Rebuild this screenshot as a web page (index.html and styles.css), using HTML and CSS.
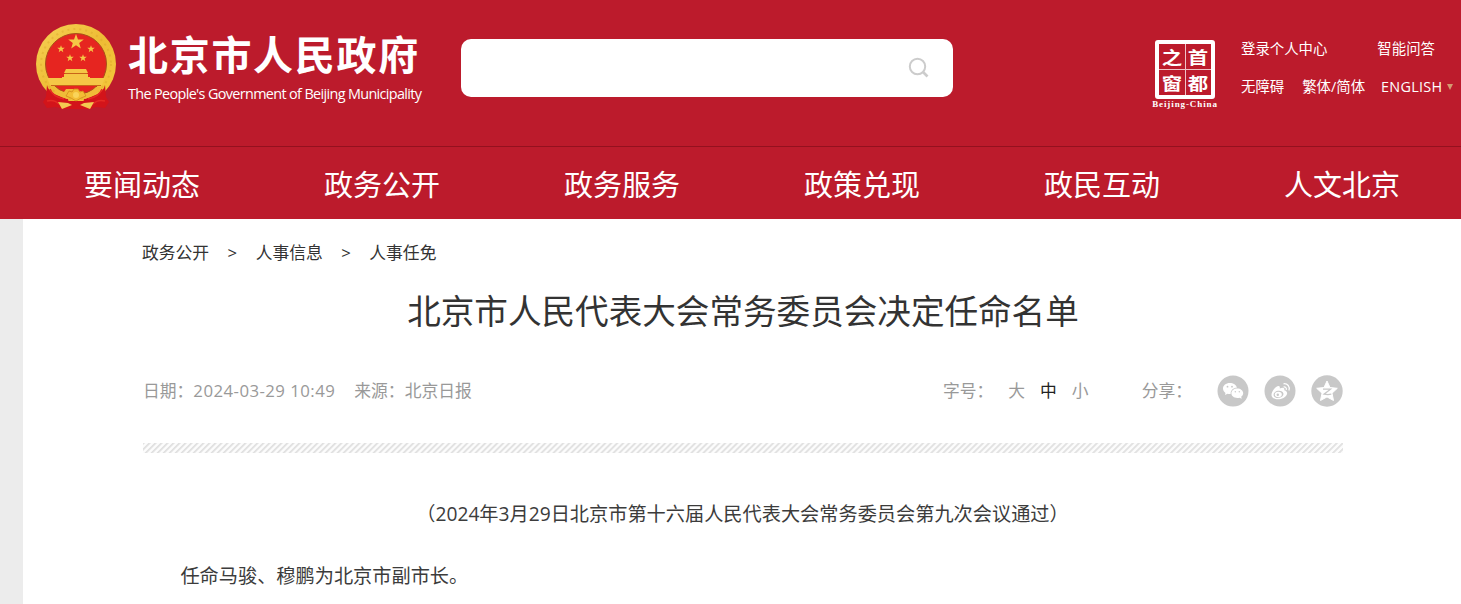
FILE: index.html
```html
<!DOCTYPE html>
<html lang="zh-CN">
<head>
    <meta charset="UTF-8">
    <meta name="viewport" content="width=device-width, initial-scale=1.0">
    <title>北京市人民代表大会常务委员会决定任命名单</title>
    <link rel="stylesheet" href="styles.css">
</head>
<body>
    <header class="header">
        <div class="top">
            <a class="logo" href="#">
                <svg class="emblem" width="82" height="88" viewBox="0 0 82 88">
                    <defs>
                        <linearGradient id="gold" x1="0" y1="0" x2="1" y2="1">
                            <stop offset="0" stop-color="#f6d155"/>
                            <stop offset=".5" stop-color="#eebc35"/>
                            <stop offset="1" stop-color="#f5c83c"/>
                        </linearGradient>
                        <path id="star" d="M0-8 2-2.6 7.8-2.5 3.2 1.1 4.8 6.6 0 3.3-4.8 6.6-3.2 1.1-7.8-2.5-2-2.6z"/>
                    </defs>
                    <circle cx="41" cy="41" r="40" fill="url(#gold)"/>
                    <circle cx="41" cy="41" r="35" fill="none" stroke="#d59d25" stroke-width="2" stroke-dasharray="2 4" opacity=".35"/>
                    <circle cx="41" cy="41" r="30.5" fill="#e62520" stroke="#a95118" stroke-width="1"/>
                    <g fill="#f5c746">
                        <use href="#star" transform="translate(41 19)"/>
                        <use href="#star" transform="translate(26 26) scale(.48)"/>
                        <use href="#star" transform="translate(56 26) scale(.48)"/>
                        <use href="#star" transform="translate(35 35) scale(.48)"/>
                        <use href="#star" transform="translate(48 35) scale(.48)"/>
                        <path d="M31 46h20l2 4H29zM29 51h24v3h2v4H27v-4h2z"/>
                        <path d="M12 55h58l-3 7H15z"/>
                    </g>
                    <path d="M30 50.500h22M16 62.500h50" stroke="#c86518" stroke-width="1"/>
                    <path d="M12 62q1 7 12 11l9 3 2 9-5 1-10-2-8 1-4-6 3-5z" fill="#d3141a"/>
                    <path d="M70 62q-1 7-12 11l-9 3-2 9 5 1 10-2 8 1 4-6-3-5z" fill="#d3141a"/>
                    <path d="M15 66q3 8 14 10M67 66q-3 8-14 10M12 78q7-2 12 3M70 78q-7-2-12 3" fill="none" stroke="#e52a24" stroke-width="1.500"/>
                    <path d="M29 78h24l4 8H25z" fill="#d3141a"/>
                    <path d="M23 79l10 1 4 2-10 4zM59 79l-10 1-4 2 10 4z" fill="#f4ca51"/>
                    <path d="M15 64q6 9 17 12l5-2h8l5 2q11-3 17-12l-6 0q-5 6-12 7l-3-3-3 1-2-3h-10l-2 3-3-1-3 3q-5-2-8-7z" fill="#f0bb38"/>
                    <path d="M31 73l3-5 3 1 2-3h4l2 3 3-1 3 5-5 2-5 3-5-3z" fill="#f3bd35" stroke="#d28b1c" stroke-width=".8"/>
                    <circle cx="41" cy="72" r="3" fill="#f9d45a"/>
                </svg>
                <span class="logo-text">
                    <strong>北京市人民政府</strong>
                    <span class="logo-en">The People's Government of Beijing Municipality</span>
                </span>
            </a>
            <div class="search">
                <svg width="22" height="22" viewBox="0 0 22 22" fill="none" stroke="#ccc" stroke-width="2">
                    <circle cx="9.500" cy="9.500" r="7.700"/>
                    <path d="M15 15l4.500 4.500" stroke-width="2.600"/>
                </svg>
            </div>
            <a class="stamp" href="#">
                <span class="stamp-box">
                    <span>之</span><span>首</span>
                    <span>窗</span><span>都</span>
                </span>
                <span class="stamp-name">Beijing-China</span>
            </a>
            <div class="links">
                <div class="links-row">
                    <a href="#">登录个人中心</a>
                    <a href="#">智能问答</a>
                </div>
                <div class="links-row">
                    <a href="#">无障碍</a>
                    <a href="#">繁体/简体</a>
                    <a class="english" href="#">ENGLISH</a>
                </div>
            </div>
        </div>
        <nav class="nav">
            <a href="#">要闻动态</a>
            <a href="#">政务公开</a>
            <a href="#">政务服务</a>
            <a href="#">政策兑现</a>
            <a href="#">政民互动</a>
            <a href="#">人文北京</a>
        </nav>
    </header>

    <main class="main">
        <div class="crumbs">
            <a href="#">政务公开</a>
            <span>&gt;</span>
            <a href="#">人事信息</a>
            <span>&gt;</span>
            <a href="#">人事任免</a>
        </div>
        <h1>北京市人民代表大会常务委员会决定任命名单</h1>
        <div class="info">
            <span class="date">日期：<span class="time">2024-03-29 10:49</span></span>
            <span>来源：北京日报</span>
            <div class="size">
                <span class="size-label">字号：</span>
                <a href="#">大</a>
                <a class="active" href="#">中</a>
                <a href="#">小</a>
            </div>
            <div class="share">
                <span class="share-label">分享：</span>
                <a href="#">
                    <svg width="32" height="32" viewBox="0 0 32 32">
                        <circle cx="16" cy="16" r="15.500" fill="#c8c8c8"/>
                        <path d="M12.700 8C9 8 6 10.400 6 13.500c0 1.800 1 3.400 2.500 4.400L8 20l2.500-1.200q1.500.4 3.200.3c-.5-3.700 2.700-6.300 6.200-6.300C19.400 10 16.300 8 12.700 8z" fill="#fff"/>
                        <path d="M20.300 13.500c-3.400 0-5.900 2.100-5.900 4.800s2.500 4.700 5.900 4.700q1.200 0 2.200-.3l2.200 1.100-.5-2c1.200-.9 2-2.100 2-3.500 0-2.700-2.600-4.800-5.900-4.800z" fill="#fff"/>
                        <g fill="#c8c8c8"><circle cx="10.500" cy="11.700" r=".9"/><circle cx="15" cy="11.700" r=".9"/><circle cx="18.300" cy="16.800" r=".7"/><circle cx="22.300" cy="16.800" r=".7"/></g>
                    </svg>
                </a>
                <a href="#">
                    <svg width="32" height="32" viewBox="0 0 32 32">
                        <circle cx="16" cy="16" r="15.500" fill="#c8c8c8"/>
                        <path d="M13.500 11.200c1.500-.5 2.800 0 2.300 2.200 2.700-1.200 5.300-.8 4.500 1.900 4.500 1.300 3.300 5.500-.8 7.600-5 2.600-12 1.300-12-2.900 0-3.400 3.500-7.800 6-8.800z" fill="#fff"/>
                        <ellipse cx="14.500" cy="19.300" rx="5" ry="3.600" fill="#c8c8c8" transform="rotate(-10 14.500 19.300)"/>
                        <ellipse cx="14.300" cy="19.500" rx="3.500" ry="2.800" fill="#fff"/>
                        <circle cx="13.800" cy="19.800" r="1.200" fill="#c8c8c8"/>
                        <path d="M19.500 12c2-.4 3.400 1.200 2.700 3M19.500 8.800c4-.6 6.800 2.900 5.400 6.700" fill="none" stroke="#fff" stroke-width="1.200"/>
                    </svg>
                </a>
                <a href="#">
                    <svg width="32" height="32" viewBox="0 0 32 32">
                        <circle cx="16" cy="16" r="15.700" fill="#c8c8c8"/>
                        <path d="M16 6l3 6.500 7.300.8-5.300 4.900 1.500 7.300L16 21.900l-6.500 3.600 1.500-7.300-5.300-4.900 7.300-.8z" fill="#fff" stroke="#fff" stroke-linejoin="round"/>
                        <path d="M12 14.200h7.500l-6.500 5q4 .7 7.300 0" fill="none" stroke="#c8c8c8" stroke-width="1.300"/>
                    </svg>
                </a>
            </div>
        </div>
        <div class="line"></div>
        <article class="article">
            <p class="center">（2024年3月29日北京市第十六届人民代表大会常务委员会第九次会议通过）</p>
            <p class="indent">任命马骏、穆鹏为北京市副市长。</p>
        </article>
    </main>
</body>
</html>
```

FILE: styles.css
```css
* {
    box-sizing: border-box;
}

body {
    margin: 0;
    height: 604px;
    overflow: hidden;
    background: #ececec;
    color: #333;
    font-family: "Open Sans", "Noto Sans CJK SC", sans-serif;
    font-size: 16.8px;
}

a {
    color: inherit;
    text-decoration: none;
}

.header {
    height: 219px;
    background: #bc1b2c;
    color: #fff;
}

.top {
    display: flex;
    align-items: flex-start;
    height: 147px;
    padding-left: 35px;
    border-bottom: 1px solid #94111f;
}

.logo {
    display: flex;
    width: 426px;
    padding-top: 23px;
}

.logo-text {
    display: flex;
    flex-direction: column;
    margin-left: 11px;
    white-space: nowrap;
}

.logo-text strong {
    padding-top: 2px;
    font-size: 40px;
    line-height: 60px;
    letter-spacing: 1.7px;
}

.logo-en {
    margin-top: -2px;
    font-size: 14.4px;
    line-height: 22px;
    letter-spacing: -0.64px;
}

.search {
    display: flex;
    align-items: center;
    justify-content: flex-end;
    width: 492px;
    height: 58px;
    margin-top: 39px;
    padding-right: 23px;
    background: #fff;
    border-radius: 10px;
}

.stamp {
    display: flex;
    flex-direction: column;
    align-items: center;
    width: 68px;
    margin: 40px 0 0 198px;
}

.stamp-box {
    display: grid;
    grid-template-columns: 1fr 1fr;
    grid-template-rows: 1fr 1fr;
    width: 60px;
    height: 59px;
    border: 4px solid #fff;
    border-radius: 3px;
    background:
        linear-gradient(#f0c2c7, #f0c2c7) center / 1px 100% no-repeat,
        linear-gradient(#f0c2c7, #f0c2c7) center / 100% 1px no-repeat;
}

.stamp-box span {
    text-align: center;
    font-family: "Noto Sans CJK SC", sans-serif;
    font-size: 17px;
    font-weight: bold;
    line-height: 25px;
    transform: scaleX(1.2);
}

.stamp-name {
    font-family: "Liberation Serif", serif;
    font-size: 9px;
    font-weight: bold;
    line-height: 10px;
    letter-spacing: 0.9px;
    white-space: nowrap;
}

.links {
    width: 220px;
    margin: 37px 0 0 22px;
    font-size: 14.4px;
    line-height: 24px;
    white-space: nowrap;
}

.links-row {
    display: flex;
    height: 37px;
}

.links-row:first-child {
    gap: 50px;
}

.links-row:last-child {
    padding-top: 1px;
}

.links-row:last-child a {
    margin-right: 18px;
}

.links-row:last-child a:nth-child(2) {
    margin-right: 16px;
}

.links-row .english {
    letter-spacing: 0.3px;
}

.links-row .english::after {
    content: "";
    display: inline-block;
    margin-left: 5px;
    border: 3px solid transparent;
    border-top: 6px solid #d49a70;
    border-bottom: 0;
    vertical-align: 2px;
}

.nav {
    display: flex;
    height: 72px;
    padding-left: 22px;
}

.nav a {
    flex: 0 0 240px;
    text-align: center;
    font-size: 29px;
    line-height: 75px;
}

.main {
    height: 385px;
    margin-left: 23px;
    padding: 0 118px 0 120px;
    background: #fff;
}

.crumbs {
    display: flex;
    height: 68px;
    margin-left: -1px;
    line-height: 68px;
}

.crumbs span {
    width: 46.5px;
    text-align: center;
}

h1 {
    margin: -1px 0 0;
    text-align: center;
    font-size: 33.6px;
    font-weight: normal;
    line-height: 50px;
}

.info {
    display: flex;
    align-items: center;
    height: 32px;
    margin-top: 39px;
    color: #999;
    line-height: 24px;
    white-space: nowrap;
}

.date {
    margin-right: 19px;
}

.time {
    letter-spacing: 0.45px;
}

.size {
    display: flex;
    gap: 15px;
    margin-left: auto;
}

.size .active {
    color: #222;
}

.share {
    display: flex;
    align-items: center;
    gap: 15px;
    margin-left: 53px;
}

.share-label {
    margin-right: 10px;
}

.share svg {
    display: block;
}

.line {
    height: 10px;
    margin-top: 36px;
    background: repeating-linear-gradient(135deg, #e0e0e0 0, #e4e4e4 1px, #fcfcfc 2px, #fcfcfc 3.4px, #e0e0e0 4.24px);
}

.article {
    padding-top: 30px;
    color: #3c3c3c;
    font-size: 19.2px;
}

.article p {
    margin: 0 0 0 -1px;
    line-height: 62px;
}

.center {
    text-align: center;
}

.indent {
    text-indent: 2em;
}
```
